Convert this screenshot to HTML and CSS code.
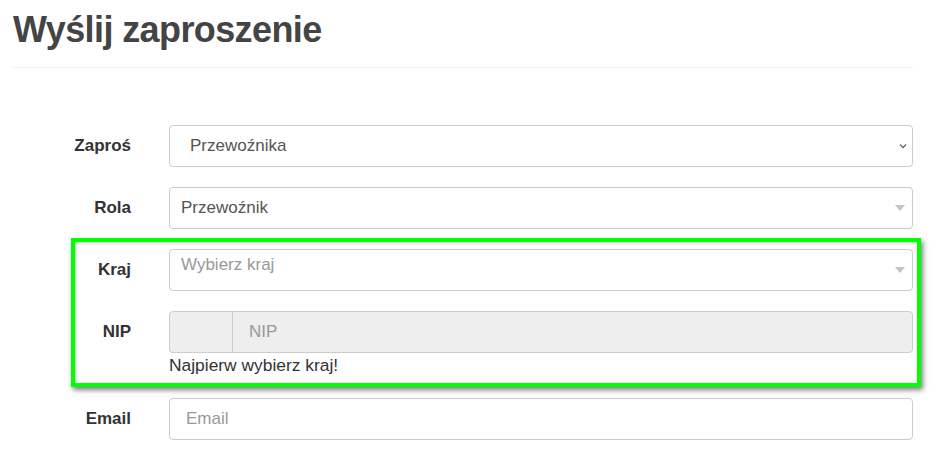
FILE: index.html
```html
<!DOCTYPE html>
<html lang="pl">
<head>
<meta charset="utf-8">
<title>Wyślij zaproszenie</title>
<link rel="stylesheet" href="styles.css">
</head>
<body>
<div class="page">
  <h1 class="title">Wyślij zaproszenie</h1>
  <hr class="divider">
  <form class="form">
    <div class="row">
      <label class="label">Zaproś</label>
      <div class="field">
        <div class="control control-native">
          <span class="value native-value">Przewoźnika</span>
          <svg class="chevron" width="8" height="6" viewBox="0 0 8 6"><polyline points="1,1.5 4,4.5 7,1.5" fill="none" stroke="#666" stroke-width="1.3"/></svg>
        </div>
      </div>
    </div>
    <div class="row">
      <label class="label">Rola</label>
      <div class="field">
        <div class="control">
          <span class="value">Przewoźnik</span>
          <span class="caret"></span>
        </div>
      </div>
    </div>
    <div class="highlight">
      <div class="row">
        <label class="label">Kraj</label>
        <div class="field">
          <div class="control control-top">
            <span class="value placeholder">Wybierz kraj</span>
            <span class="caret"></span>
          </div>
        </div>
      </div>
      <div class="row row-last">
        <label class="label">NIP</label>
        <div class="field">
          <div class="control control-disabled">
            <span class="addon"></span>
            <span class="value placeholder input-text">NIP</span>
          </div>
          <div class="help">Najpierw wybierz kraj!</div>
        </div>
      </div>
    </div>
    <div class="row">
      <label class="label">Email</label>
      <div class="field">
        <div class="control">
          <span class="value placeholder input-text">Email</span>
        </div>
      </div>
    </div>
  </form>
</div>
</body>
</html>
```

FILE: styles.css
```css
* { box-sizing: border-box; }

html, body {
  margin: 0;
  padding: 0;
  background: #fff;
}

body {
  font-family: "Liberation Sans", Arial, sans-serif;
  font-size: 17px;
  color: #333;
}

.page {
  width: 900px;
  margin-left: 13px;
}

.title {
  margin: 0;
  padding-top: 10px;
  font-size: 36px;
  line-height: 40px;
  font-weight: bold;
  color: #444;
  letter-spacing: -0.6px;
}

.divider {
  margin: 17px 0 0 0;
  border: 0;
  border-top: 1px solid #eee;
  height: 0;
}

.form {
  padding-top: 57px;
}

.row {
  display: grid;
  grid-template-columns: 118px 744px;
  column-gap: 38px;
  align-items: start;
  margin-bottom: 20px;
}

.row-last {
  margin-bottom: 0;
}

.label {
  height: 42px;
  display: flex;
  align-items: center;
  justify-content: flex-end;
  font-weight: bold;
  color: #333;
}

.control {
  height: 42px;
  border: 1px solid #ccc;
  border-radius: 4px;
  display: flex;
  align-items: center;
  position: relative;
  color: #555;
  background: #fff;
}

.value {
  padding-left: 11px;
}

.native-value {
  padding-left: 20px;
}

.input-text {
  padding-left: 16px;
}

.placeholder {
  color: #999;
}

.control-top {
  align-items: flex-start;
  padding-top: 5px;
}

.control-top .caret {
  top: 17px;
}

.chevron {
  position: absolute;
  right: 5px;
  top: 17px;
}

.caret {
  position: absolute;
  right: 7px;
  top: 17px;
  width: 0;
  height: 0;
  border-left: 5px solid transparent;
  border-right: 5px solid transparent;
  border-top: 6px solid #c4c4c4;
}

.control-disabled {
  background: #eee;
  align-items: stretch;
}

.control-disabled .input-text {
  display: flex;
  align-items: center;
}

.addon {
  width: 63px;
  border-right: 1px solid #ccc;
}

.help {
  line-height: 24px;
  font-size: 17.4px;
  color: #333;
}

.highlight {
  position: relative;
  margin-bottom: 21px;
}

.highlight::after {
  content: "";
  position: absolute;
  top: -11px;
  bottom: -10px;
  left: 58px;
  right: -8px;
  border: 4px solid #00ff00;
  box-shadow: 2px 3px 5px rgba(0, 0, 0, 0.5), inset 1px 1px 3px rgba(0, 0, 0, 0.25);
  pointer-events: none;
}
```
